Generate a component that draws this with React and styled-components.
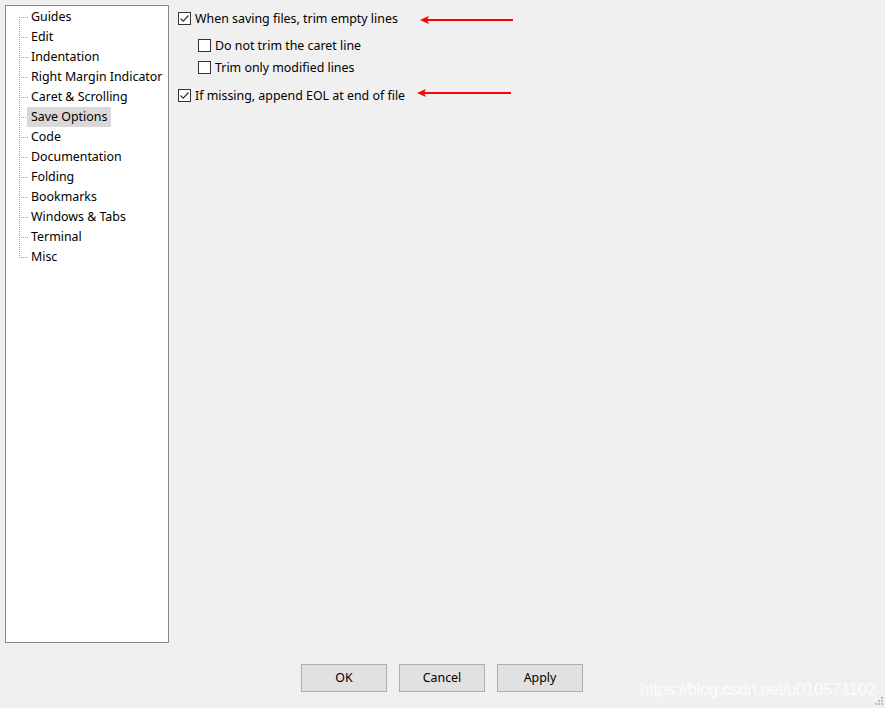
import styled, { createGlobalStyle } from 'styled-components';

const GlobalStyle = createGlobalStyle`
  html, body {
    margin: 0;
    padding: 0;
    background: #f0f0f0;
  }
  body {
    font-family: "Noto Sans", "Liberation Sans", sans-serif;
    font-size: 12.4px;
    color: #000;
  }
`;

const Window = styled.div`
  position: relative;
  width: 885px;
  height: 708px;
  background: #f0f0f0;
  overflow: hidden;
  display: flex;
  flex-direction: column;
`;

const Main = styled.div`
  display: flex;
  padding: 5px 0 0 5px;
  gap: 9px;
  height: 638px;
`;

const TreePanel = styled.div`
  flex: none;
  width: 164px;
  height: 638px;
  padding-top: 1px;
  background: #fff;
  border: 1px solid #828790;
  box-sizing: border-box;
`;

const TreeList = styled.ul`
  position: relative;
  list-style: none;
  margin: 0;
  padding: 0 0 0 13px;

  &::before {
    content: '';
    position: absolute;
    left: 13px;
    top: 10px;
    height: 241px;
    border-left: 1px dotted #a0a0a0;
  }
`;

const TreeItem = styled.li`
  display: flex;
  align-items: center;
  height: 20px;

  &::before {
    content: '';
    flex: none;
    width: 9px;
    border-top: 1px dotted #a0a0a0;
  }
`;

const TreeLabel = styled.span`
  flex: none;
  padding: 0 4px;
  margin-left: -1px;
  line-height: 20px;
  height: 20px;
  background: ${(p) => (p.$selected ? '#d9d9d9' : 'transparent')};
  white-space: nowrap;
`;

const Options = styled.div`
  display: flex;
  flex-direction: column;
  padding-top: 4px;
`;

const OptionRow = styled.label`
  display: flex;
  align-items: ${(p) => (p.$bottom ? 'flex-end' : 'center')};
  height: ${(p) => p.$h}px;
  padding-left: ${(p) => (p.$indent ? 20 : 0)}px;
  white-space: nowrap;
`;

const Box = styled.span`
  flex: none;
  width: 13px;
  height: 13px;
  box-sizing: border-box;
  border: 1px solid #333;
  background: #fff;
  margin-right: 4px;
  margin-bottom: ${(p) => (p.$bottom ? 2 : 0)}px;
  display: inline-flex;
  align-items: center;
  justify-content: center;
`;

const Arrow = styled.svg`
  flex: none;
  margin-left: ${(p) => p.$gap}px;
  position: relative;
  top: ${(p) => p.$dy}px;
`;

const Footer = styled.div`
  display: flex;
  justify-content: center;
  gap: 12px;
  margin-top: 21px;
  padding-right: 1px;
`;

const Button = styled.button`
  width: 86px;
  height: 28px;
  background: #e1e1e1;
  border: 1px solid #adadad;
  font-family: inherit;
  font-size: 12.4px;
  line-height: 24px;
  color: #000;
  padding: 0;
`;

const Watermark = styled.div`
  position: absolute;
  left: 640px;
  top: 680px;
  font-family: "Liberation Sans", Arial, sans-serif;
  font-size: 17px;
  color: rgba(255, 255, 255, 0.85);
  letter-spacing: -0.45px;
`;

const Grip = styled.svg`
  position: absolute;
  right: 2px;
  bottom: 2px;
`;

const treeItems = [
  'Guides',
  'Edit',
  'Indentation',
  'Right Margin Indicator',
  'Caret & Scrolling',
  'Save Options',
  'Code',
  'Documentation',
  'Folding',
  'Bookmarks',
  'Windows & Tabs',
  'Terminal',
  'Misc',
];

const Check = ({ checked, bottom }) => (
  <Box $bottom={bottom}>
    {checked && (
      <svg width="11" height="11" viewBox="0 0 11 11">
        <path d="M1.5 5.5 L4.2 8.2 L9.5 2.5" fill="none" stroke="#333" strokeWidth="1.2" />
      </svg>
    )}
  </Box>
);

const RedArrow = ({ gap, length, dy }) => (
  <Arrow $gap={gap} $dy={dy} width={length} height="10" viewBox={`0 0 ${length} 10`}>
    <line x1="6" y1="5" x2={length} y2="5" stroke="#ff0000" strokeWidth="2.2" />
    <path d="M0 5 L9 1 L7 5 L9 9 Z" fill="#ff0000" />
  </Arrow>
);

export default function App() {
  return (
    <Window>
      <GlobalStyle />
      <Main>
        <TreePanel>
          <TreeList>
            {treeItems.map((t) => (
              <TreeItem key={t}>
                <TreeLabel $selected={t === 'Save Options'}>{t}</TreeLabel>
              </TreeItem>
            ))}
          </TreeList>
        </TreePanel>
        <Options>
          <OptionRow $h={18}>
            <Check checked />
            When saving files, trim empty lines
            <RedArrow gap={22} length={93} dy={2} />
          </OptionRow>
          <OptionRow $h={27} $indent $bottom>
            <Check bottom />
            Do not trim the caret line
          </OptionRow>
          <OptionRow $h={22} $indent $bottom>
            <Check bottom />
            Trim only modified lines
          </OptionRow>
          <OptionRow $h={28} $bottom>
            <Check checked bottom />
            If missing, append EOL at end of file
            <RedArrow gap={12} length={94} dy={-6} />
          </OptionRow>
        </Options>
      </Main>
      <Footer>
        <Button>OK</Button>
        <Button>Cancel</Button>
        <Button>Apply</Button>
      </Footer>
      <Watermark>https://blog.csdn.net/u010571102</Watermark>
      <Grip width="10" height="10" viewBox="0 0 10 10">
        {[[8, 0], [5, 3], [8, 3], [2, 6], [5, 6], [8, 6]].map(([x, y]) => (
          <rect key={`${x}-${y}`} x={x} y={y + 1} width="2" height="2" fill="#bcbcbc" />
        ))}
      </Grip>
    </Window>
  );
}
